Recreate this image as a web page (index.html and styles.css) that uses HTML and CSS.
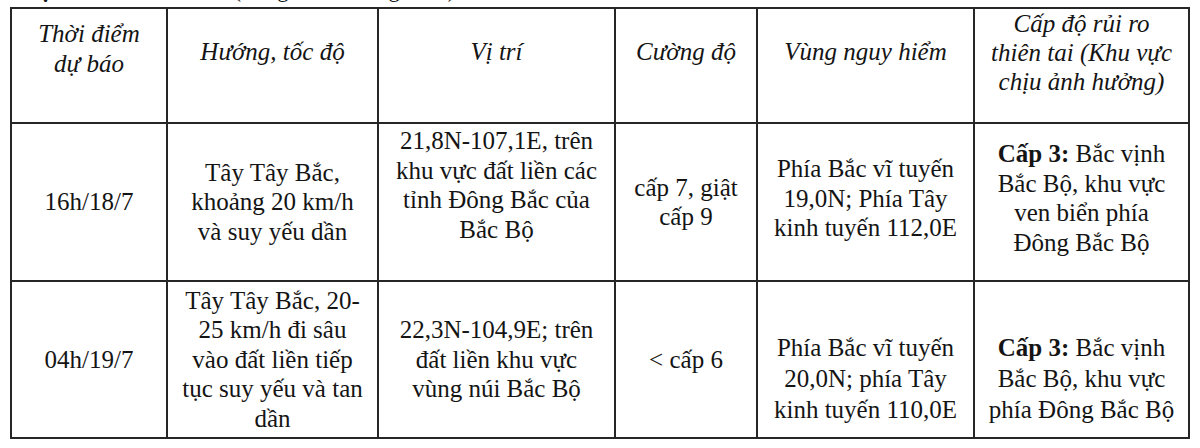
FILE: index.html
```html
<!DOCTYPE html>
<html lang="vi">
<head>
<meta charset="utf-8">
<title>Dự báo diễn biến bão</title>
<link rel="stylesheet" href="styles.css">
</head>
<body>
<div class="caption"><p class="caption-text"><b>Dự báo diễn biến bão </b>(trong 24 đến 48 giờ tới)</p></div>
<table class="forecast">
  <colgroup>
    <col class="c1"><col class="c2"><col class="c3"><col class="c4"><col class="c5"><col class="c6">
  </colgroup>
  <thead>
    <tr class="head-row">
      <th class="h-two">Thời điểm<br>dự báo</th>
      <th>Hướng, tốc độ</th>
      <th>Vị trí</th>
      <th>Cường độ</th>
      <th>Vùng nguy hiểm</th>
      <th class="h-three">Cấp độ rủi ro<br>thiên tai (Khu vực<br>chịu ảnh hưởng)</th>
    </tr>
  </thead>
  <tbody>
    <tr class="row-a">
      <td>16h/18/7</td>
      <td>Tây Tây Bắc,<br>khoảng 20 km/h<br>và suy yếu dần</td>
      <td class="top p2">21,8N-107,1E, trên<br>khu vực đất liền các<br>tỉnh Đông Bắc của<br>Bắc Bộ</td>
      <td>cấp 7, giật<br>cấp 9</td>
      <td class="top p30">Phía Bắc vĩ tuyến<br>19,0N; Phía Tây<br>kinh tuyến 112,0E</td>
      <td class="top p15"><b>Cấp 3:</b> Bắc vịnh<br>Bắc Bộ, khu vực<br>ven biển phía<br>Đông Bắc Bộ</td>
    </tr>
    <tr class="row-b">
      <td>04h/19/7</td>
      <td>Tây Tây Bắc, 20-<br>25 km/h đi sâu<br>vào đất liền tiếp<br>tục suy yếu và tan<br>dần</td>
      <td>22,3N-104,9E; trên<br>đất liền khu vực<br>vùng núi Bắc Bộ</td>
      <td>&lt; cấp 6</td>
      <td class="top p50 loose">Phía Bắc vĩ tuyến<br>20,0N; phía Tây<br>kinh tuyến 110,0E</td>
      <td class="top p50 loose"><b>Cấp 3:</b> Bắc vịnh<br>Bắc Bộ, khu vực<br>phía Đông Bắc Bộ</td>
    </tr>
  </tbody>
</table>
</body>
</html>
```
FILE: styles.css
```css
html, body {
  margin: 0;
  padding: 0;
  background: #ffffff;
}

body,
.forecast,
.forecast th,
.forecast td,
.caption-text {
  font-family: "Liberation Serif", serif;
  color: #141414;
}

.caption {
  height: 7px;
  overflow: hidden;
}

.caption-text {
  margin: -23px 0 0 0;
  padding-left: 23px;
  font-size: 22.5px;
  line-height: 26px;
  white-space: nowrap;
}

.forecast {
  margin-left: 10px;
  width: 1178px;
  table-layout: fixed;
  border-collapse: collapse;
  font-size: 25px;
  line-height: 29.5px;
}

.c1 { width: 156px; }
.c2 { width: 211px; }
.c3 { width: 237px; }
.c4 { width: 142px; }
.c5 { width: 217px; }
.c6 { width: 215px; }

.forecast th,
.forecast td {
  border: 2px solid #262626;
  text-align: center;
  vertical-align: middle;
  white-space: nowrap;
  padding: 0 4px;
  font-size: 25px;
}

.forecast th {
  font-weight: normal;
  font-style: italic;
  vertical-align: top;
  padding-top: 28px;
}

.forecast th.h-two { padding-top: 10px; }
.forecast th.h-three { padding-top: 0; line-height: 29px; }

.head-row { height: 115px; }
.row-a { height: 158px; }
.row-b { height: 157px; }

.forecast td b { font-weight: bold; }

.forecast td.top { vertical-align: top; }
.forecast td.loose { line-height: 31px; }
.forecast td.p2 { padding-top: 2px; }
.forecast td.p15 { padding-top: 15px; }
.forecast td.p30 { padding-top: 30px; }
.forecast td.p50 { padding-top: 50px; }
```
